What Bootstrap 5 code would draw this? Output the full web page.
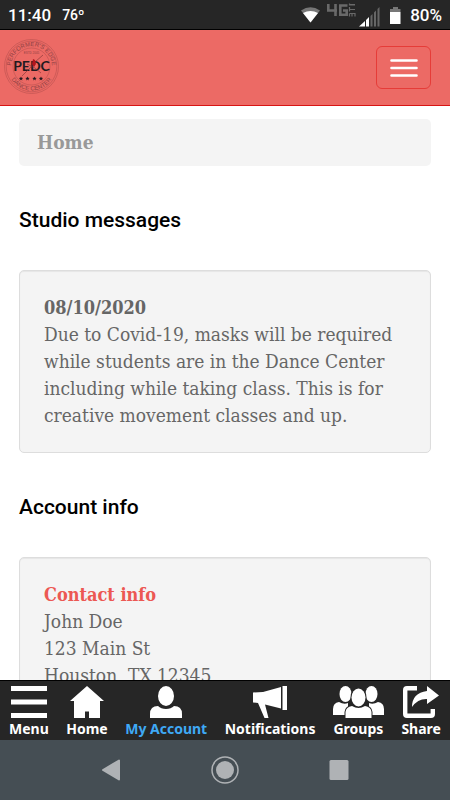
<!DOCTYPE html>
<html lang="en">
<head>
<meta charset="utf-8">
<meta name="viewport" content="width=device-width, initial-scale=1">
<title>My Account</title>
<link href="https://cdn.jsdelivr.net/npm/bootstrap@5.3.0/dist/css/bootstrap.min.css" rel="stylesheet">
<style>
  body { font-family: "DejaVu Serif Condensed", "DejaVu Serif", serif; font-size: 19px; line-height: 27px; color: #666; background: #fff; }
  .status { background: #262626; border-bottom: 1px solid #000; height: 30px; font-family: Roboto, sans-serif; font-size: 17px; line-height: 29px; font-weight: 500; padding: 2px 8px 0; }
  .status .clock { gap: 11px; }
  .status .temp { font-size: 14px; }
  .brandbar { background: #ec6a65; border-bottom: 1px solid #d81414; padding: 9px 19px 11px 4px; height: 76px; }
  .toggler { width: 55px; height: 43px; border: 1px solid #e63c38; border-radius: 6px; margin-top: 2px; }
  .crumb { background: #f4f4f4; color: #999; border-radius: 5px; padding: 10px 18px; }
  .page { padding: 13px 19px 0; }
  .page h2 { font-family: Roboto, sans-serif; font-size: 21px; line-height: 30px; color: #000; margin: 39px 0 35px; }
  .panel { background: #f4f4f4; border: 1px solid #ddd; border-radius: 5px; box-shadow: inset 0 1px 1px rgba(0,0,0,.06); padding: 23px 24px; }
  .panel strong { font-size: 18px; }
  .contact { color: #ec5853; }
  .tabs { background: #262626; border-top: 1px solid #000; height: 60px; padding: 5px 9px 0; font-family: "Noto Sans", sans-serif; font-size: 14px; line-height: 22px; font-weight: 700; }
  .tabs a { color: #fff; }
  .tabs a.current { color: #3fa9f5; }
  .system { background: #454e54; height: 60px; padding: 0 56px; }
</style>
<script src="https://cdn.jsdelivr.net/npm/bootstrap@5.3.0/dist/js/bootstrap.bundle.min.js"></script>
</head>
<body>
<div class="d-flex flex-column vh-100 overflow-hidden">
  <div class="status flex-shrink-0 d-flex align-items-center justify-content-between text-white">
    <div class="clock d-flex align-items-center"><span>11:40</span><span class="temp">76º</span></div>
    <div class="d-flex align-items-center">
      <svg width="109" height="29" viewBox="0 0 109 29" aria-hidden="true">
        <path d="M0 9.500Q9.500 3 19 9.500L9.500 21.500Z" fill="#777"/><path d="M2 12Q9.500 8 17 12L9.500 21.500Z" fill="#fff"/>
        <g fill="none" stroke="#696969" stroke-width="2.600"><path d="M27.300 3v6.500H36M34.500 3v12M46.500 4.500H39.300v9.200H45.700V9.500H42"/></g>
        <g fill="none" stroke="#696969" stroke-width="1.200"><path d="M48.500 4.500V2.500M48.500 3.500H54M48.500 4h5.500M48.500 7v-1M48.500 8.500H54M48.500 6.500v4M48.500 12.500H54V15.500M51 12.500v3M48.500 12.500v3"/></g>
        <path d="M58 25.500L64 20V25.500ZM65 19L68 16V25.500H65Z" fill="#fff"/>
        <path d="M69.500 15l2-2v12.500h-2zM73 11.500l2-2v16h-2zM76.500 8l2-2v19.500h-2z" fill="#666"/>
        <path d="M92 6h5v2h2.500v3H89V8h3z" fill="#777"/><path d="M89 11h10.500v12H89z" fill="#fff"/>
      </svg>
      <span>80%</span>
    </div>
  </div>

  <nav class="brandbar flex-shrink-0 d-flex justify-content-between align-items-center" aria-label="Site">
    <a href="#" aria-label="Performer's Edge Dance Center">
      <svg class="d-block" width="55" height="55" viewBox="0 0 55 55">
        <defs><path id="arcTop" d="M9 36.500A20.500 20.500 0 1 1 46 36.500"/><path id="arcLow" d="M3.500 27.500A24 24 0 0 0 51.500 27.500"/></defs>
        <g fill="none" stroke="#b9504f" stroke-width=".6"><circle cx="27.500" cy="27.500" r="27"/><circle cx="27.500" cy="27.500" r="25.300"/><circle cx="27.500" cy="27.500" r="18.500"/></g>
        <g font-family="Liberation Sans, sans-serif" fill="#8f4143" text-anchor="middle">
          <text font-size="6"><textPath href="#arcTop" startOffset="50%">PERFORMER'S EDGE</textPath></text>
          <text font-size="6"><textPath href="#arcLow" startOffset="50%">DANCE CENTER</textPath></text>
          <text x="27.500" y="15" font-size="3">ESTD 2005</text>
        </g>
        <text x="27.500" y="32" font-family="Lato, sans-serif" font-size="14" font-weight="700" fill="#241a20" text-anchor="middle">PEDC</text>
        <path d="M18 37L26 29L31 23L39 16M23 25L31 29L37 34" fill="none" stroke="#7b3033" stroke-width=".6"/>
        <path d="M29 20l2 1 1 4-2 3-2-3z" fill="#b3161d"/>
        <path id="st" transform="translate(17 39.500)" d="M0-2.100L.6-.7 2.100-.6 1 .4 1.300 1.900 0 1.100-1.300 1.900-1 .4-2.100-.6-.6-.7Z" fill="#241a20"/>
        <use href="#st" x="6.500"/><use href="#st" x="13.500"/><use href="#st" x="20"/>
      </svg>
    </a>
    <button type="button" class="toggler btn p-0 d-flex align-items-center justify-content-center" aria-label="Toggle navigation">
      <svg width="28" height="20" viewBox="0 0 28 20"><path d="M1.500 2.500h25M1.500 10h25M1.500 17.500h25" stroke="#fff" stroke-width="2.600" stroke-linecap="round"/></svg>
    </button>
  </nav>

  <main class="page flex-grow-1 overflow-hidden">
    <div class="crumb fw-bold">Home</div>
    <h2>Studio messages</h2>
    <section class="panel">
      <strong class="d-block">08/10/2020</strong>
      <p class="mb-0">Due to Covid-19, masks will be required while students are in the Dance Center including while taking class. This is for creative movement classes and up.</p>
    </section>
    <h2>Account info</h2>
    <section class="panel">
      <strong class="contact d-block">Contact info</strong>
      <address class="mb-0">John Doe<br>123 Main St<br>Houston, TX 12345</address>
    </section>
  </main>

  <nav class="tabs flex-shrink-0 d-flex justify-content-between text-center text-nowrap" aria-label="App">
    <a href="#" class="text-decoration-none d-flex flex-column align-items-center"><svg width="36" height="32" viewBox="0 0 36 32"><path d="M0 0h36v5H0zM0 13.500h36v5H0zM0 27h36v5H0z" fill="#fff"/></svg>Menu</a>
    <a href="#" class="text-decoration-none d-flex flex-column align-items-center"><svg width="34" height="32" viewBox="0 0 34 32"><path d="M17 0L34 15H30V32H19V25.500H15V32H4V15H0Z" fill="#fff"/></svg>Home</a>
    <a href="#" class="current text-decoration-none d-flex flex-column align-items-center" aria-current="page"><svg width="32" height="32" viewBox="0 0 32 32"><ellipse cx="16" cy="10" rx="8" ry="10" fill="#fff"/><path d="M0 32V28Q0 20 8 20Q11 23 16 23T24 20Q32 20 32 28V32Z" fill="#fff"/></svg>My Account</a>
    <a href="#" class="text-decoration-none d-flex flex-column align-items-center"><svg width="34" height="32" viewBox="0 0 34 32"><path d="M0 6.500L10 6L28 1V22.500L12 18.500L15.500 32H11.500L5 17L0 16.500ZM29.500 0H34V24H29.500Z" fill="#fff"/></svg>Notifications</a>
    <a href="#" class="text-decoration-none d-flex flex-column align-items-center"><svg width="51" height="32" viewBox="0 0 51 32"><g fill="#fff"><ellipse cx="12.500" cy="8" rx="6" ry="8"/><ellipse cx="38.500" cy="8" rx="6" ry="8"/><path d="M0 29V23Q0 17 6 16Q11 19 15 17V29ZM51 29V23Q51 17 45 16Q40 19 36 17V29Z"/></g><g fill="#fff" stroke="#262626" stroke-width="2" paint-order="stroke"><ellipse cx="25.500" cy="11.500" rx="7" ry="9"/><path d="M12.500 33V26Q13 21 19 20Q25.500 24 32 20Q38 21 38.500 26V33Z"/></g></svg>Groups</a>
    <a href="#" class="text-decoration-none d-flex flex-column align-items-center"><svg width="36" height="32" viewBox="0 0 36 32"><path d="M14 2.200H4Q2.200 2.200 2.200 4V28Q2.200 29.800 4 29.800H28Q29.800 29.800 29.800 28V23" fill="none" stroke="#fff" stroke-width="4.400"/><path d="M9 21Q9 7 24 5V0L36 9.500L24 18V13Q15 12.500 9 21Z" fill="#fff"/></svg>Share</a>
  </nav>

  <div class="system flex-shrink-0 d-flex justify-content-around align-items-center">
    <button type="button" class="btn p-0 border-0 d-flex" aria-label="Back"><svg width="20" height="22" viewBox="0 0 20 22"><path d="M18 1.500V20.500L2 11Z" fill="#afb2b5" stroke="#afb2b5" stroke-width="2" stroke-linejoin="round"/></svg></button>
    <button type="button" class="btn p-0 border-0 d-flex" aria-label="Home screen"><svg width="28" height="28" viewBox="0 0 28 28"><circle cx="14" cy="14" r="13" fill="none" stroke="#afb2b5" stroke-width="1.500"/><circle cx="14" cy="14" r="9" fill="#afb2b5"/></svg></button>
    <button type="button" class="btn p-0 border-0 d-flex" aria-label="Recent apps"><svg width="20" height="20" viewBox="0 0 20 20"><rect width="19" height="20" x=".5" rx="1.500" fill="#afb2b5"/></svg></button>
  </div>
</div>
</body>
</html>
